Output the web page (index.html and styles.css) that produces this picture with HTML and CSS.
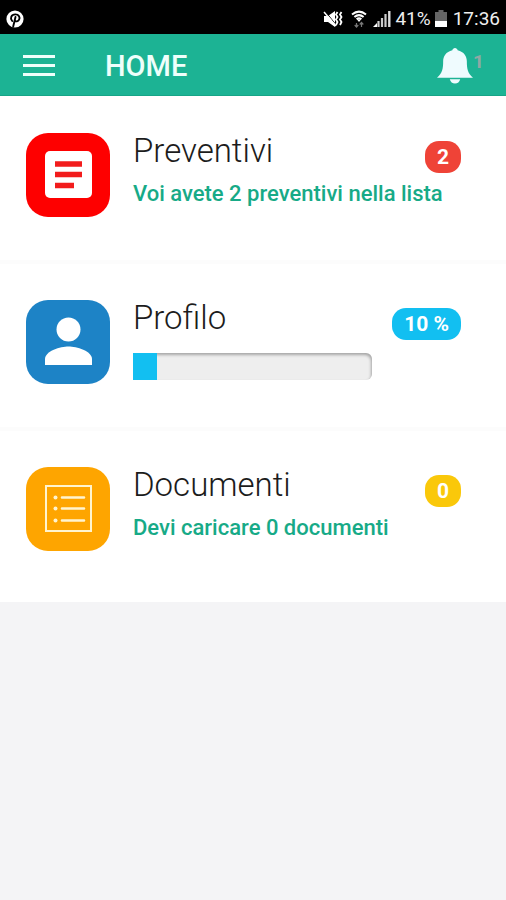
FILE: index.html
```html
<!DOCTYPE html>
<html lang="it">
<head>
<meta charset="utf-8">
<meta name="viewport" content="width=device-width, initial-scale=1">
<title>Home</title>
<link rel="stylesheet" href="styles.css">
</head>
<body>
<div class="status-bar">
  <svg class="status-app" viewBox="0 0 18 18" aria-hidden="true">
    <circle cx="9" cy="9" r="8.6" fill="#fff"/>
    <path d="M6.200 11C3.600 8 5.400 4.400 9.300 4.400c3.700 0 5 2.900 3.800 5.300-1 2-3.400 2.100-4 .9M9.500 7L7.200 16.500" fill="none" stroke="#000" stroke-width="1.900" stroke-linecap="round"/>
  </svg>
  <div class="status-info">
    <svg class="status-mute" viewBox="0 0 20 18" aria-hidden="true">
      <path d="M1 6h4l7-5v16l-7-5H1z" fill="#fff"/>
      <path d="M2 1l12 15" stroke="#000" stroke-width="1"/>
      <path d="M1 2l12 14" stroke="#fff" stroke-width="1.500"/>
      <path d="M14.500 2L13 4.500 14.500 7 13 9.500l1.500 2.500-1.500 3M18.500 2L17 4.500 18.500 7 17 9.500l1.500 2.500-1.500 3" fill="none" stroke="#fff" stroke-width="1.800"/>
    </svg>
    <svg class="status-wifi" viewBox="0 0 16 18" aria-hidden="true">
      <path d="M1 4.500Q8-1.200 15 4.500M3.400 7Q8 3.200 12.600 7M5.600 9.300Q8 7.400 10.400 9.300" fill="none" stroke="#fff" stroke-width="2"/>
      <path d="M6 9.500h4l-2 2.500z" fill="#fff"/>
      <path d="M5.500 17v-4M3.700 15l1.800 2 1.800-2M10.500 17v-4M8.700 14.500l1.800-2 1.800 2" fill="none" stroke="#777" stroke-width="1.200"/>
    </svg>
    <svg class="status-signal" viewBox="0 0 18 18" aria-hidden="true">
      <path d="M0 17l4-4v4z" fill="#fff"/>
      <path d="M5.500 17v-6M9 17V8M12.500 17V4" stroke="#ccc" stroke-width="2.200"/>
      <path d="M16.300 17V1" stroke="#ddd" stroke-width="2.400"/>
    </svg>
    <span class="status-percent">41%</span>
    <svg class="status-battery" viewBox="0 0 12 18" aria-hidden="true">
      <path d="M3.500 0h5v2H12v9H0V2h3.500z" fill="#666"/>
      <path d="M0 11h12v6H0z" fill="#fff"/>
    </svg>
    <time>17:36</time>
  </div>
</div>
<header class="app-bar">
  <button class="menu-button" type="button" aria-label="Menu">
    <svg viewBox="0 0 32 24" aria-hidden="true"><path d="M0 2.500h32M0 11.500h32M0 20.500h32" stroke="#effffb" stroke-width="3"/></svg>
  </button>
  <h1 class="app-title">HOME</h1>
  <button class="bell-button" type="button" aria-label="Notifiche">
    <svg class="bell-icon" viewBox="0 0 38 38" aria-hidden="true">
      <path d="M19 0c1.500 0 2.400 1 2.800 2.300C28.500 4 31.500 8.500 31.500 14c0 8 .8 12.500 6.500 17.500H0C5.700 26.500 6.500 22 6.500 14 6.500 8.500 9.500 4 16.200 2.300 16.600 1 17.500 0 19 0zM13.500 33h11c-.7 3-2.700 4.500-5.500 4.500S14.200 36 13.500 33z" fill="#effbfe"/>
    </svg>
    <span class="bell-count">1</span>
  </button>
</header>
<main class="card-list">
  <a class="card" href="#preventivi">
    <svg class="card-icon card-icon-red" viewBox="0 0 84 84" aria-hidden="true">
      <rect x="19" y="18" width="47" height="47" rx="5" fill="#fff"/>
      <path d="M29 31h27M29 41.500h27M29 52.500h19" stroke="#f21c1c" stroke-width="5.500"/>
    </svg>
    <span class="card-body">
      <span class="card-head">
        <span class="card-title">Preventivi</span>
        <span class="badge badge-red">2</span>
      </span>
      <span class="card-note">Voi avete 2 preventivi nella lista</span>
    </span>
  </a>
  <a class="card" href="#profilo">
    <svg class="card-icon card-icon-blue" viewBox="0 0 84 84" aria-hidden="true">
      <circle cx="42.500" cy="29.500" r="12" fill="#fff"/>
      <path d="M19 65v-6c0-8 15.500-12.500 23.500-12.500S66 51 66 59v6z" fill="#fff"/>
    </svg>
    <span class="card-body">
      <span class="card-head">
        <span class="card-title">Profilo</span>
        <span class="badge badge-blue">10 %</span>
      </span>
      <progress class="card-progress" value="10" max="100" aria-label="Profilo"></progress>
    </span>
  </a>
  <a class="card" href="#documenti">
    <svg class="card-icon card-icon-orange" viewBox="0 0 84 84" aria-hidden="true">
      <rect x="20" y="19" width="45" height="45" fill="none" stroke="#fff4cf" stroke-width="2"/>
      <g fill="#fff4cf"><circle cx="29.500" cy="30.500" r="2"/><circle cx="29.500" cy="41.500" r="2"/><circle cx="29.500" cy="53.500" r="2"/></g>
      <path d="M36 30.500h22M36 41.500h22M36 53.500h22" stroke="#fff4cf" stroke-width="2.600" stroke-linecap="round"/>
    </svg>
    <span class="card-body">
      <span class="card-head">
        <span class="card-title">Documenti</span>
        <span class="badge badge-yellow">0</span>
      </span>
      <span class="card-note">Devi caricare 0 documenti</span>
    </span>
  </a>
</main>
</body>
</html>
```
FILE: styles.css
```css
* {
  box-sizing: border-box;
}

body {
  margin: 0;
  min-height: 100vh;
  background: #f4f4f6;
  color: #1c1c1c;
  font-family: Roboto, "Liberation Sans", sans-serif;
}

.status-bar {
  display: flex;
  align-items: center;
  justify-content: space-between;
  height: 34px;
  padding: 4px 6px 0;
  background: #000;
  color: #eee;
  font-size: 19px;
  line-height: 24px;
}

.status-info {
  display: flex;
  align-items: center;
}

.status-info svg,
.status-app {
  height: 18px;
}

.status-app {
  width: 18px;
}

.status-mute {
  width: 20px;
  margin-right: 8px;
}

.status-wifi {
  width: 16px;
  margin-right: 6px;
}

.status-signal {
  width: 18px;
  margin-right: 4px;
}

.status-percent {
  margin-right: 4px;
}

.status-battery {
  width: 12px;
  margin-right: 6px;
}

.app-bar {
  display: flex;
  align-items: center;
  height: 62px;
  padding: 3px 22px 0 23px;
  background: #1cb394;
  border-bottom: 1px solid #16a587;
  color: #effffb;
}

.menu-button,
.bell-button {
  display: flex;
  padding: 0;
  border: 0;
  background: none;
  font-family: inherit;
  cursor: pointer;
}

.menu-button svg {
  width: 32px;
  height: 24px;
}

.app-title {
  flex: 1;
  margin: 0 0 0 50px;
  font-size: 29px;
  font-weight: 500;
  line-height: 36px;
}

.bell-icon {
  width: 36px;
  height: 38px;
}

.bell-count {
  padding-top: 4px;
  color: #8fa8a4;
  font-size: 19px;
  font-weight: 700;
  line-height: 22px;
}

.card-list {
  padding-top: 1px;
  background: #fff;
}

.card {
  display: flex;
  gap: 23px;
  min-height: 167px;
  padding: 36px 45px 42px 26px;
  border-bottom: 4px solid #fcfcfc;
  background: #fff;
  color: inherit;
  text-decoration: none;
}

.card:last-child {
  min-height: 171px;
  border-bottom: 0;
}

.card-icon {
  flex: none;
  width: 84px;
  height: 84px;
  border-radius: 22px;
}

.card-icon-red {
  background: #fe0000;
}

.card-icon-blue {
  background: #1d83c6;
}

.card-icon-orange {
  background: #fea500;
}

.card-body {
  flex: 1;
  min-width: 0;
}

.card-head {
  display: flex;
  align-items: flex-start;
  justify-content: space-between;
}

.card-title {
  font-size: 33px;
  font-weight: 300;
  line-height: 36px;
}

.card-note {
  display: block;
  margin-top: 8px;
  color: #17aa87;
  font-size: 22px;
  font-weight: 500;
  line-height: 26px;
}

.badge {
  margin-top: 8px;
  padding: 0 12px;
  border-radius: 14px;
  color: #fff;
  font-size: 21px;
  font-weight: 700;
  line-height: 32px;
}

.badge-red {
  background: #ef4337;
}

.badge-blue {
  background: #12bff1;
}

.badge-yellow {
  background: #fac80a;
}

.card-progress {
  appearance: none;
  display: block;
  width: 73%;
  height: 27px;
  margin-top: 13px;
  border: 0;
  border-radius: 6px;
  background: none;
}

.card-progress::-webkit-progress-bar {
  border-radius: 0 6px 6px 0;
  background: #eee;
  box-shadow: inset -1px 2px 3px rgba(0, 0, 0, 0.3);
}

.card-progress::-webkit-progress-value {
  background: #12bff1;
}
```
